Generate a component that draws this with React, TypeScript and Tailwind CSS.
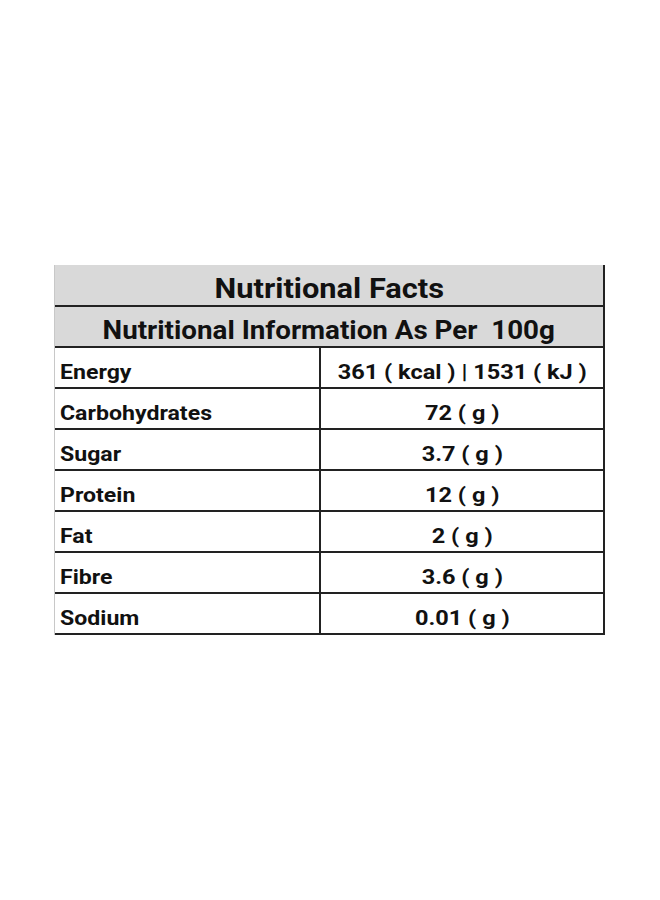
import React from "react";

const rows: [string, string][] = [
  ["Energy", "361 ( kcal ) | 1531 ( kJ )"],
  ["Carbohydrates", "72 ( g )"],
  ["Sugar", "3.7 ( g )"],
  ["Protein", "12 ( g )"],
  ["Fat", "2 ( g )"],
  ["Fibre", "3.6 ( g )"],
  ["Sodium", "0.01 ( g )"],
];

export default function App() {
  return (
    <div className="min-h-[900px] w-[660px] bg-white pt-[265px] pl-[54px] font-['Roboto',sans-serif] font-bold text-[#111]">
      <div className="w-[551px] border-l border-l-[#c8c8c8] border-r-2 border-r-[#222]">
        <div className="h-[42px] border-b-2 border-[#222] bg-[#d9d9d9] flex items-center justify-center text-[28px] leading-none pt-[8px]">
          <span className="inline-block scale-x-[1.1]">Nutritional Facts</span>
        </div>
        <div className="h-[41px] border-b-2 border-[#222] bg-[#d9d9d9] flex items-center justify-center text-[25px] leading-none whitespace-pre pt-[7px]">
          <span className="inline-block scale-x-[1.11]">{"Nutritional Information As Per  100g"}</span>
        </div>
        {rows.map(([k, v]) => (
          <div key={k} className="h-[41px] border-b-2 border-[#222] flex text-[21px] leading-none">
            <div className="w-[266px] border-r-2 border-[#222] flex items-center pl-[5px] pt-[10px]">
              <span className="inline-block origin-left scale-x-[1.1]">{k}</span>
            </div>
            <div className="flex-1 flex items-center justify-center pt-[10px]">
              <span className="inline-block scale-x-[1.12]">{v}</span>
            </div>
          </div>
        ))}
      </div>
    </div>
  );
}
